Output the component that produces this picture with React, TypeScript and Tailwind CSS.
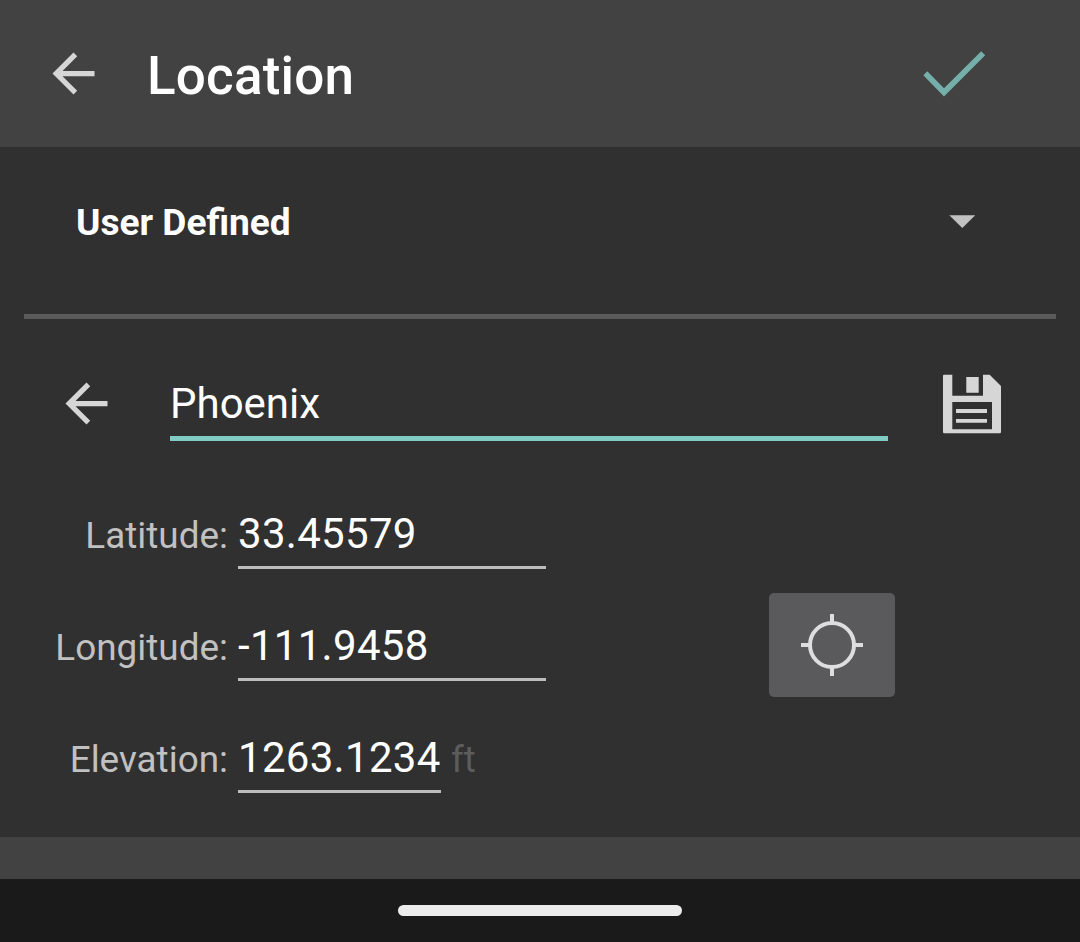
import React from "react";

function BackArrow() {
  return (
    <svg viewBox="0 0 24 24" className="block size-[63px] shrink-0" fill="#d6d6d6">
      <path d="M20 11H7.83l5.59-5.59L12 4l-8 8 8 8 1.41-1.41L7.83 13H20z" />
    </svg>
  );
}

function CheckIcon() {
  return (
    <svg viewBox="0 0 64 48" className="block h-12 w-16" fill="#74afaa">
      <path d="M5.3 21.3 1.3 25.3 22 46.5 63.2 5.2 59.2 1.2 22 38.3z" />
    </svg>
  );
}

function SaveIcon() {
  return (
    <svg viewBox="0 0 58 60" className="block h-[60px] w-[58px] shrink-0" fill="#d6d6d6">
      <path
        fillRule="evenodd"
        d="M1 .7H9.3V21.7H40V.7H46.7L58 12V58Q58 59.3 56.7 59.3H1.3Q0 59.3 0 58V1.7Q0 .7 1 .7ZM9.3 28V55.3H49V28Z"
      />
      <path d="M23.3 3H35.7V18.7H23.3zM13 35H44V39H13zM13 45H44V48.7H13z" />
    </svg>
  );
}

function CrosshairIcon() {
  return (
    <svg viewBox="0 0 62 62" className="block size-[62px]" fill="none" stroke="#dedede" strokeWidth="4">
      <circle cx="31" cy="31" r="22" />
      <path d="M31 0V8M31 54V62M0 31H8M54 31H62" />
    </svg>
  );
}

interface FieldProps {
  label: string;
  value: string;
  unit?: string;
}

function CoordinateField({ label, value, unit }: FieldProps) {
  return (
    <div className="flex h-28 shrink-0 items-baseline">
      <label className="w-[228px] shrink-0 text-right text-[36.9px] leading-[50px] text-[#c1c1c1]">{label}</label>
      <div
        className={
          unit
            ? "ml-2.5 w-[203px] border-b-[3px] border-[#bdbdbd] pb-[7px] text-[42px] leading-[50px] tracking-[0.3px] whitespace-nowrap"
            : "ml-2.5 w-[308px] border-b-[3px] border-[#bdbdbd] pb-[7px] text-[42px] leading-[50px] tracking-[0.3px] whitespace-nowrap"
        }
      >
        {value}
      </div>
      {unit && <span className="ml-2.5 text-[36.75px] leading-[50px] text-[#5c5c5c]">{unit}</span>}
    </div>
  );
}

export default function App() {
  return (
    <div className="flex h-[942px] w-[1080px] flex-col overflow-hidden bg-[#303030] font-['Roboto',sans-serif] text-white">
      <header className="flex h-[147px] shrink-0 items-center bg-[#424242] pr-[94px] pl-[42px]">
        <BackArrow />
        <h1 className="mt-1 ml-[42px] flex-1 text-[53px] leading-[60px] font-medium tracking-[0.2px]">Location</h1>
        <CheckIcon />
      </header>

      <section className="mx-6 flex h-[172px] shrink-0 items-start border-b-[5px] border-[#5a5a5a] pt-[51px] pr-20 pl-[52px]">
        <div className="flex h-[50px] flex-1 items-center justify-between">
          <span className="text-[37.1px] leading-[50px] font-bold">User Defined</span>
          <svg viewBox="0 0 26 13" className="mr-px mb-[3px] block h-[13px] w-[26px]" fill="#c1c1c1">
            <path d="M.3 .3H26.3L13.3 13z" />
          </svg>
        </div>
      </section>

      <main className="flex h-[518px] shrink-0 flex-col">
        <div className="flex h-[122px] shrink-0 items-end pl-[55px]">
          <div className="mb-[6px]">
            <BackArrow />
          </div>
          <div className="ml-[52px] w-[718px] border-b-[5px] border-[#80cbc4] pb-[7px] text-[42px] leading-[50px]">
            Phoenix
          </div>
          <div className="mb-[7px] ml-[55px]">
            <SaveIcon />
          </div>
        </div>
        <div className="flex h-[396px] shrink-0 items-start pt-[68px]">
          <div className="flex w-[769px] flex-col">
            <CoordinateField label="Latitude:" value="33.45579" />
            <CoordinateField label="Longitude:" value="-111.9458" />
            <CoordinateField label="Elevation:" value="1263.1234" unit="ft" />
          </div>
          <button className="mt-[84px] flex h-[104px] w-[126px] items-center justify-center rounded-[5px] bg-[#5a5a5c]">
            <CrosshairIcon />
          </button>
        </div>
      </main>

      <div className="h-[42px] shrink-0 bg-[#424242]" />
      <footer className="flex flex-1 items-center justify-center bg-[#1a1a1a]">
        <div className="h-[11px] w-[284px] rounded-full bg-[#ececec]" />
      </footer>
    </div>
  );
}
